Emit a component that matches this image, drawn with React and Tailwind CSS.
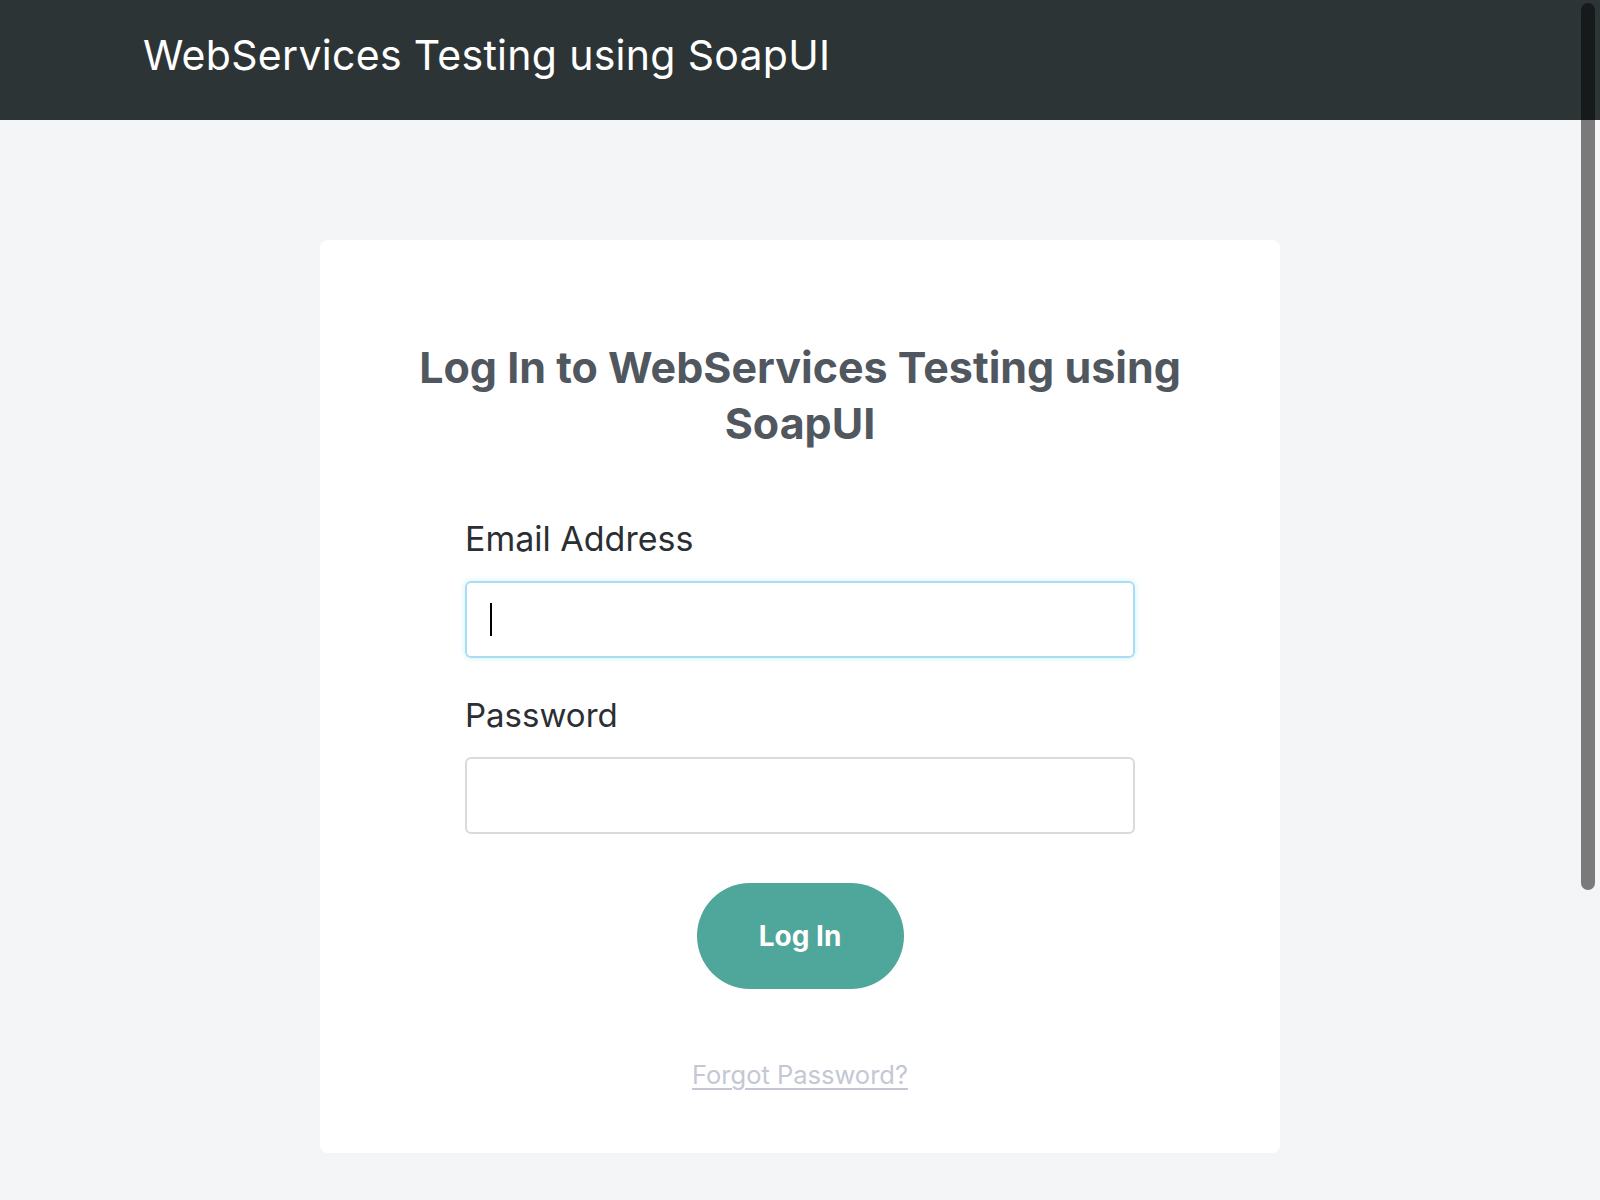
import React from "react";

export default function App() {
  return (
    <div
      className="relative h-[1200px] overflow-hidden bg-[#f4f5f7]"
      style={{ fontFamily: "Inter, 'Noto Sans', sans-serif" }}
    >
      {/* Top bar */}
      <header className="h-[120px] bg-[#2d3436] flex items-center px-[143px] pb-[10px]">
        <h1 className="text-white text-[41px] font-normal leading-none tracking-[0.3px]">
          WebServices Testing using SoapUI
        </h1>
      </header>

      {/* Login card */}
      <main className="pt-[120px]">
        <div className="w-[960px] mx-auto bg-white rounded-lg pt-[99px] pb-[62px] flex flex-col items-center">
          <h2 className="text-[#50575e] text-[43px] font-bold leading-[56px] text-center w-[820px]">
            Log In to WebServices Testing using SoapUI
          </h2>

          <form className="w-[670px] mt-[68px] flex flex-col" onSubmit={(e) => e.preventDefault()}>
            <label className="text-[#2b2f33] text-[34px] leading-[40px] mb-[22px]">Email Address</label>
            <div className="relative">
              <input
                type="email"
                className="h-[77px] w-full rounded-md border-2 border-[#a9def0] shadow-[0_0_6px_#cdeef8] outline-none px-[24px] text-[26px] text-[#2b2f33]"
              />
              {/* text caret */}
              <span className="absolute left-[25px] top-[22px] w-[2px] h-[33px] bg-black" />
            </div>

            <label className="text-[#2b2f33] text-[33px] leading-[40px] mt-[37px] mb-[22px]">Password</label>
            <input
              type="password"
              className="h-[77px] w-full rounded-md border-2 border-[#dadada] outline-none px-[24px] text-[26px]"
            />

            <button
              type="submit"
              className="self-center mt-[49px] w-[207px] h-[106px] rounded-full bg-[#4fa69a] text-white text-[28px] font-bold"
            >
              Log In
            </button>

            <a
              href="#"
              className="self-center mt-[70px] text-[#c3c8d3] text-[25.5px] leading-[32px] underline underline-offset-4"
            >
              Forgot Password?
            </a>
          </form>
        </div>
      </main>

      {/* Overlay scrollbar thumb */}
      <div className="absolute top-[3px] right-[5px] w-[14px] h-[887px] rounded-full bg-black/50" />
    </div>
  );
}
